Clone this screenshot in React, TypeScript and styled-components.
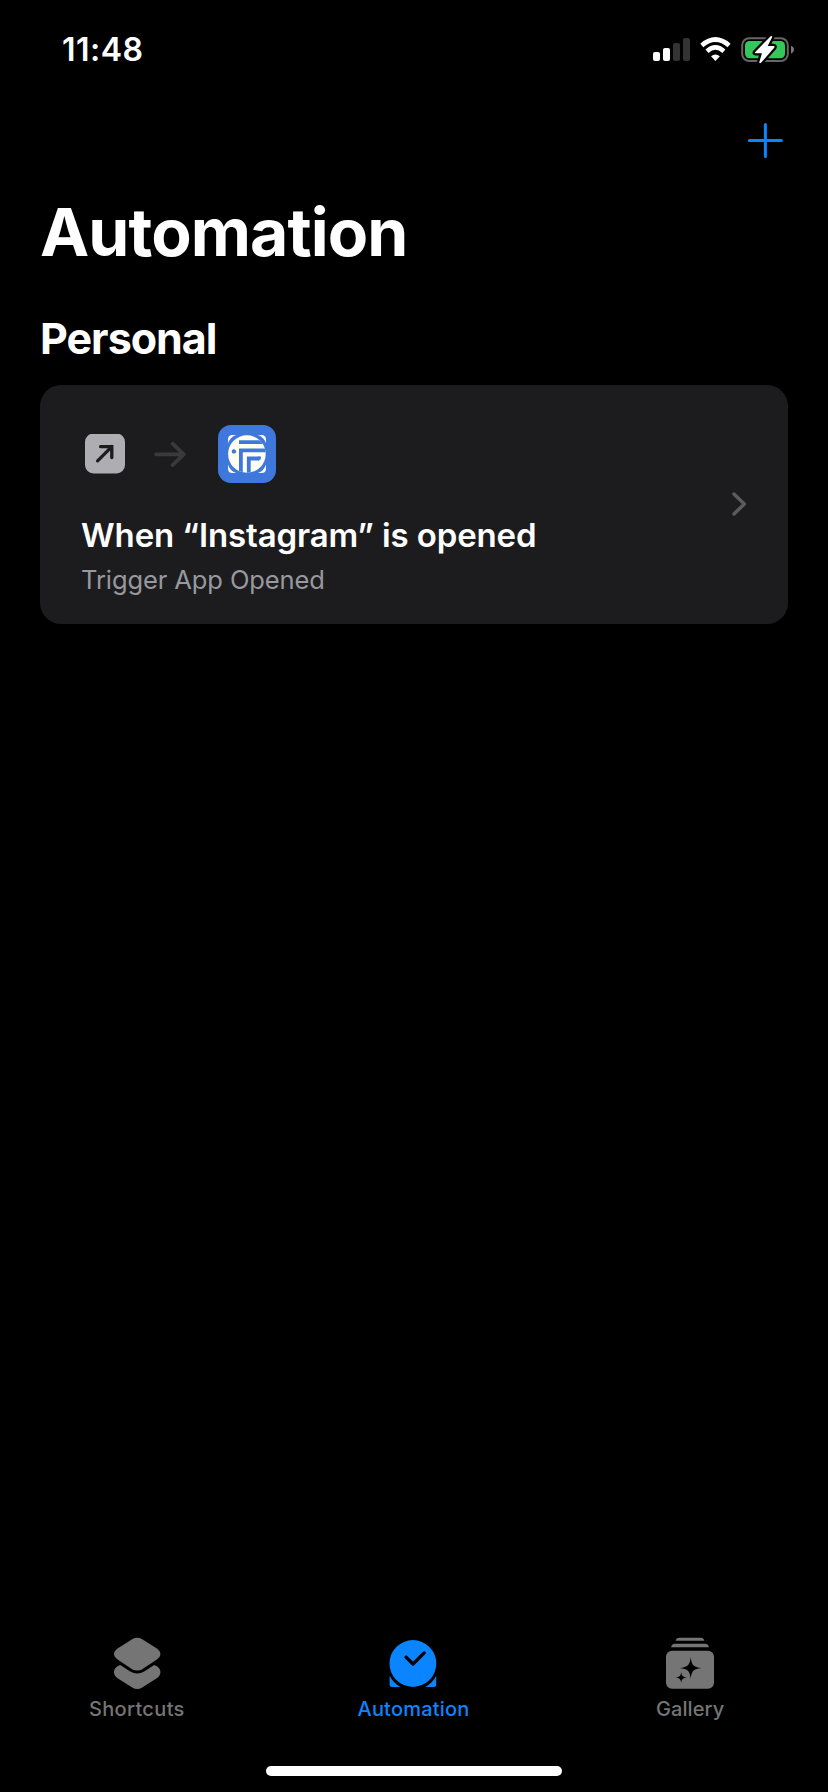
import React from "react";
import styled, { createGlobalStyle } from "styled-components";

const Global = createGlobalStyle`
  * { box-sizing: border-box; }
  body { margin: 0; background: #000; }
  svg { display: block; flex: none; }
`;

const Screen = styled.div`
  width: 828px;
  height: 1792px;
  display: flex;
  flex-direction: column;
  background: #000;
  color: #fff;
  overflow: hidden;
  white-space: nowrap;
  font-family: Inter, "Liberation Sans", sans-serif;
`;

const StatusBar = styled.header`
  height: 98px;
  padding: 30px 33px 0 62px;
  display: flex;
  justify-content: space-between;
  align-items: flex-start;
`;

const Time = styled.span`
  font-size: 32px;
  font-weight: 600;
  line-height: 40px;
  letter-spacing: 0.5px;
`;

const NavBar = styled.nav`
  height: 94px;
  padding: 24px 44px 0 0;
  display: flex;
  justify-content: flex-end;
`;

const IconButton = styled.button`
  display: block;
  width: 38px;
  height: 38px;
  padding: 0;
  border: 0;
  background: none;
`;

const Title = styled.h1`
  margin: 0;
  padding-left: 40px;
  font-size: 66px;
  font-weight: 700;
  line-height: 80px;
  letter-spacing: -0.9px;
`;

const SectionTitle = styled.h2`
  margin: 40px 0 21px;
  padding-left: 40px;
  font-size: 43px;
  font-weight: 700;
  line-height: 52px;
  letter-spacing: -1px;
`;

const Card = styled.section`
  height: 239px;
  margin: 0 40px;
  padding: 40px 38px 0 41px;
  border-radius: 21px;
  background: #1c1c1e;
  display: flex;
  justify-content: space-between;
`;

const CardBody = styled.div`
  display: flex;
  flex-direction: column;
`;

const Flow = styled.div`
  height: 58px;
  margin-bottom: 30px;
  padding-left: 4px;
  display: flex;
  align-items: center;
`;

const FlowArrow = styled.div`
  margin: 0 32px 0 29px;
`;

const RuleName = styled.div`
  font-size: 33px;
  font-weight: 600;
  line-height: 44px;
  letter-spacing: -0.12px;
`;

const RuleDetail = styled.div`
  margin-top: 7px;
  font-size: 25.5px;
  line-height: 32px;
  letter-spacing: -0.1px;
  color: #98989f;
`;

const Disclosure = styled.div`
  padding-top: 66px;
`;

const TabBar = styled.footer`
  width: 830px;
  height: 129px;
  margin: auto 0 0 -1.5px;
  display: grid;
  grid-template-columns: repeat(3, 1fr);
`;

const Tab = styled.div<{ $active?: boolean }>`
  display: flex;
  flex-direction: column;
  align-items: center;
  gap: 6px;
  color: ${(p) => (p.$active ? "#0a84ff" : "#757575")};
`;

const TabLabel = styled.span<{ $spacing: number }>`
  font-size: 20px;
  font-weight: 500;
  line-height: 24px;
  letter-spacing: ${(p) => p.$spacing}px;
`;

const HomeArea = styled.div`
  height: 26px;
  display: flex;
  justify-content: center;
`;

const HomeIndicator = styled.div`
  width: 296px;
  height: 10px;
  border-radius: 5px;
  background: #fff;
`;

const bolt = "M128 17.5 L112.5 33.2 Q111.5 34.5 113 34.5 L119.2 34.5 L116.5 43.6 Q117 45 118.3 44 L131.7 28.6 Q132.3 27.3 130.8 27.2 L125 27.2 L129.5 18.2 Q129.6 16.8 128 17.5Z";

const StatusIcons = () => (
  <svg width="142" height="40" viewBox="0 0 142 40">
    <g transform="translate(0 -2)">
      <rect x="0" y="24" width="7" height="9" rx="2" fill="#fff" />
      <rect x="10" y="20" width="7" height="13" rx="2" fill="#fff" />
      <rect x="20" y="15" width="7" height="18" rx="2" fill="#333" />
      <rect x="30" y="10" width="7" height="23" rx="2" fill="#333" />
      <path d="M48.8 17.4 Q62.4 5.6 76.1 17.4" fill="none" stroke="#fff" strokeWidth="4.6" />
      <path d="M54 23.2 Q62.4 15.7 70.9 23.2" fill="none" stroke="#fff" strokeWidth="4.6" />
      <path d="M58 28.3 Q62.4 24.9 66.9 28.3 L62.4 33Z" fill="#fff" />
      <rect x="89.2" y="10.2" width="45.6" height="22.8" rx="7" fill="none" stroke="#666" strokeWidth="2" />
      <rect x="92" y="13" width="40" height="17.2" rx="4.5" fill="#34c759" />
      <path d="M138 17.8 Q141 19 141 21.7 Q141 24.3 138 25.5Z" fill="#7a7a7a" />
      <g transform="translate(-10.3 -9.2)">
        <path d={bolt} fill="#000" stroke="#000" strokeWidth="4.6" strokeLinejoin="round" />
        <path d={bolt} fill="#fff" />
      </g>
    </g>
  </svg>
);

const PlusIcon = () => (
  <svg width="38" height="38" viewBox="0 0 38 38" fill="none" stroke="#0a84ff" strokeWidth="3" strokeLinecap="round">
    <path d="M19.4 2.6V34.4M3.4 18.5H35.4" />
  </svg>
);

const OpenAppIcon = () => (
  <svg width="40" height="40" viewBox="0 0 40 40">
    <rect y="-.5" width="40" height="40" rx="8.5" fill="#aeaeb2" />
    <path d="M12.8 27.2L27 13M15.7 13H27V24" transform="translate(-.2 -.4)" fill="none" stroke="#1c1c1e" strokeWidth="3.3" strokeLinecap="round" strokeLinejoin="miter" />
  </svg>
);

const ArrowIcon = () => (
  <svg width="32" height="28" viewBox="0 0 32 28" fill="none" stroke="#3a3a3c" strokeWidth="3.8" strokeLinecap="round" strokeLinejoin="round">
    <path d="M2 14.3H29.5M18.7 3.7L29.7 14.3L18.7 25" />
  </svg>
);

const AppLogo = () => (
  <svg width="58" height="58" viewBox="0 0 58 58">
    <defs>
      <clipPath id="disc"><circle cx="28.9" cy="29" r="18.8" /></clipPath>
    </defs>
    <rect width="58" height="58" rx="13" fill="#3e78dc" />
    <g fill="#fffef0">
      <path d="M10 18.5V14.5Q10 10 14.5 10H18.2Q11.8 12.2 10 18.5Z" />
      <path d="M48 18.5V14.5Q48 10 43.5 10H39.8Q46.2 12.2 48 18.5Z" />
      <path d="M10 39.5V43.5Q10 48 14.5 48H18.2Q11.8 45.8 10 39.5Z" />
      <path d="M48 39.5V43.5Q48 48 43.5 48H39.8Q46.2 45.8 48 39.5Z" />
    </g>
    <circle cx="28.9" cy="29" r="18.8" fill="#fffef0" />
    <circle cx="15.9" cy="26.4" r="2.2" fill="#3e78dc" />
    <g clipPath="url(#disc)" fill="none" stroke="#3e78dc" strokeWidth="3.8">
      <path d="M21 17.2H50" />
      <path d="M50 25.3H22.9V50" />
      <path d="M30.8 50V33.5H41.2" />
    </g>
    <path d="M40 31.6H43V32.4Q43 35.4 40 35.4Z" fill="#3e78dc" />
  </svg>
);

const ChevronIcon = () => (
  <svg width="18" height="26" viewBox="0 0 18 26" fill="none" stroke="#5b5b5f" strokeWidth="3.5" strokeLinecap="round" strokeLinejoin="round">
    <path d="M2 3L12.3 13L2 23" />
  </svg>
);

const ShortcutsIcon = () => (
  <svg width="48" height="54" viewBox="0 0 48 54" fill="currentColor">
    <path d="M19.2 2.2Q24.2-.5 29.2 2.2L43.5 11.3Q51.3 17 43.5 22.8L29.2 32.2Q24.2 35 19.2 32.2L4.9 22.8Q-2.9 17 4.9 11.3Z" />
    <path d="M7.2 28L17.2 34.5Q24.2 38.5 31.2 34.5L41.2 28Q47.5 30 47.5 35.6Q47.3 38.8 43.8 41.2L29.2 50.6Q24.2 53.6 19.2 50.6L4.6 41.2Q1.1 38.8 .9 35.6Q.9 30 7.2 28Z" />
  </svg>
);

const AutomationIcon = () => (
  <svg width="48" height="54" viewBox="0 0 48 54">
    <path d="M.6 38.8Q4 46 11.6 50H3.1Q.6 50 .6 47.5ZM47.2 38.8Q43.8 46 36.2 50H44.7Q47.2 50 47.2 47.5Z" fill="currentColor" />
    <circle cx="23.9" cy="26.5" r="23.4" fill="currentColor" />
    <path d="M17.1 20.1L24 27L35.2 15.9" fill="none" stroke="#000" strokeWidth="3.3" strokeLinecap="round" strokeLinejoin="round" />
  </svg>
);

const GalleryIcon = () => (
  <svg width="48" height="54" viewBox="0 0 48 54" fill="currentColor">
    <path d="M9.7 3.8Q10.3.7 13.2.7H34.8Q37.7.7 38.3 3.8Z" />
    <path d="M5 10.2Q6 6.8 9 6.8H39Q42 6.8 43 10.2Z" />
    <rect x="0" y="13.7" width="48" height="38" rx="6" />
    <path fill="#000" d="M24.7 20C25.5 28 27.5 30.2 35.5 31.1C27.5 32 25.5 34 24.7 42C23.9 34 21.9 32 13.7 31.1C21.9 30.2 23.9 28 24.7 20Z" />
    <path fill="#000" d="M15.2 35C15.7 39 16.7 40 20.8 40.5C16.7 41 15.7 42 15.2 46C14.7 42 13.7 41 9.7 40.5C13.7 40 14.7 39 15.2 35Z" />
  </svg>
);

export default function App() {
  return (
    <Screen>
      <Global />
      <StatusBar>
        <Time>11:48</Time>
        <StatusIcons />
      </StatusBar>
      <NavBar>
        <IconButton aria-label="Add automation"><PlusIcon /></IconButton>
      </NavBar>
      <main>
        <Title>Automation</Title>
        <SectionTitle>Personal</SectionTitle>
        <Card>
          <CardBody>
            <Flow>
              <OpenAppIcon />
              <FlowArrow><ArrowIcon /></FlowArrow>
              <AppLogo />
            </Flow>
            <RuleName>When “Instagram” is opened</RuleName>
            <RuleDetail>Trigger App Opened</RuleDetail>
          </CardBody>
          <Disclosure><ChevronIcon /></Disclosure>
        </Card>
      </main>
      <TabBar>
        <Tab><ShortcutsIcon /><TabLabel $spacing={0.35}>Shortcuts</TabLabel></Tab>
        <Tab $active><AutomationIcon /><TabLabel $spacing={0.2}>Automation</TabLabel></Tab>
        <Tab><GalleryIcon /><TabLabel $spacing={0.1}>Gallery</TabLabel></Tab>
      </TabBar>
      <HomeArea><HomeIndicator /></HomeArea>
    </Screen>
  );
}
